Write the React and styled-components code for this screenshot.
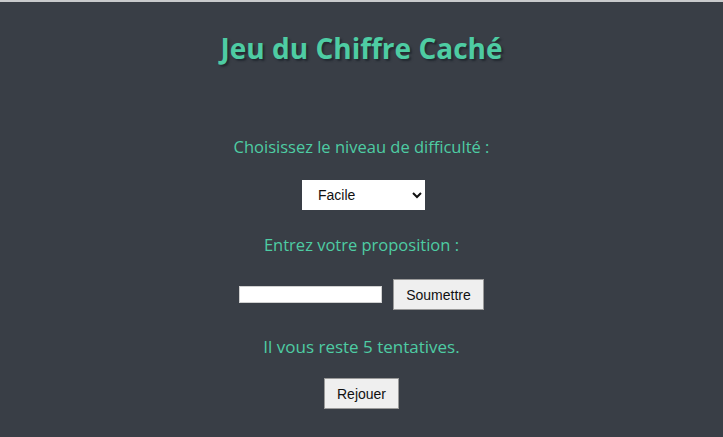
import React, { useState } from "react";
import styled, { createGlobalStyle } from "styled-components";

const GlobalStyle = createGlobalStyle`
  html, body {
    margin: 0;
    padding: 0;
    background: #393e46;
  }
  body {
    font-family: "Comic Sans MS", "Open Sans", sans-serif;
  }
`;

const Page = styled.div`
  min-height: 437px;
  box-sizing: border-box;
  border-top: 2px solid #c9cacc;
  background: #393e46;
  display: flex;
  flex-direction: column;
  align-items: center;
  padding-top: 28px;
`;

const Title = styled.h1`
  margin: 0 0 71px;
  font-size: 28px;
  line-height: 36px;
  font-weight: 700;
  color: #4ecca3;
  text-shadow: 2px 2px 2px #232931;
`;

const Label = styled.p`
  margin: 0 0 ${(p) => p.$after}px;
  font-size: ${(p) => p.$size}px;
  line-height: 20px;
  color: #4ecca3;
`;

const Select = styled.select`
  width: 123px;
  height: 30px;
  box-sizing: border-box;
  margin: 0 0 25px 4px;
  padding: 0 0 0 12px;
  border: none;
  background: #fff;
  font-family: "Liberation Sans", Arial, sans-serif;
  font-size: 14px;
  color: #111;
`;

const Row = styled.div`
  display: flex;
  align-items: center;
  gap: 11px;
  margin-bottom: 27px;
`;

const Input = styled.input`
  width: 143px;
  height: 17px;
  box-sizing: border-box;
  border: 1px solid #d0d0d0;
  background: #fff;
  padding: 0 4px;
`;

const Button = styled.button`
  box-sizing: border-box;
  height: 31px;
  padding: 0 12px;
  border: 1px solid #9a9a9a;
  background: #efefef;
  font-family: "Liberation Sans", Arial, sans-serif;
  font-size: 14px;
  color: #111;
  cursor: pointer;
`;

export default function App() {
  const [level, setLevel] = useState("facile");
  const [guess, setGuess] = useState("");

  return (
    <>
      <GlobalStyle />
      <Page>
        <Title>Jeu du Chiffre Caché</Title>
        <Label $size={16.5} $after={23}>Choisissez le niveau de difficulté :</Label>
        <Select value={level} onChange={(e) => setLevel(e.target.value)}>
          <option value="facile">Facile</option>
          <option value="moyen">Moyen</option>
          <option value="difficile">Difficile</option>
        </Select>
        <Label $size={16.5} $after={24}>Entrez votre proposition :</Label>
        <Row>
          <Input type="text" value={guess} onChange={(e) => setGuess(e.target.value)} />
          <Button>Soumettre</Button>
        </Row>
        <Label $size={17} $after={21}>Il vous reste 5 tentatives.</Label>
        <Button>Rejouer</Button>
      </Page>
    </>
  );
}
